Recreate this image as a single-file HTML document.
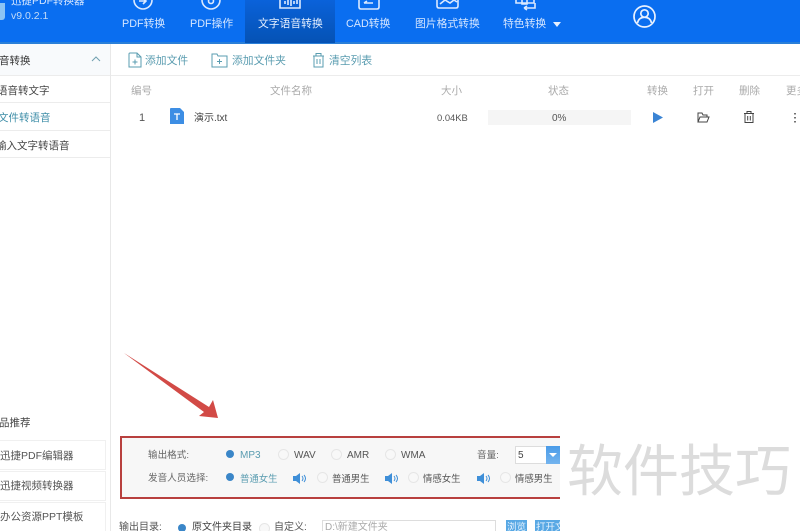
<!DOCTYPE html>
<html lang="zh"><head><meta charset="utf-8"><title>迅捷PDF转换器</title>
<style>
html,body{margin:0;padding:0;background:#fff}
#p{position:relative;width:800px;height:531px;overflow:hidden;background:#fff;font-family:"Liberation Sans","Noto Sans CJK SC",sans-serif;font-size:10.5px;color:#444}
#p div,#p span.t,#p svg{position:absolute}
.t{position:absolute;white-space:nowrap;line-height:14px}
.w{color:#d5e6ff;font-size:10.8px}
.h{color:#aaa;font-size:10.5px}
.r{width:9px;height:9px;border:1px solid #e6e6e6;border-radius:50%;background:#f8f8f8}
.d{width:8px;height:8px;border-radius:50%;background:#3a86c8}
.g{color:#666;font-size:9.6px}
.s{font-size:9.4px;color:#555}
</style></head><body><div id="p">
<div style="left:0;top:0;width:800px;height:42px;background:#0a6ef0"></div>
<div style="left:0;top:42px;width:800px;height:2px;background:#2a7fd8"></div>
<div style="left:245px;top:0;width:90px;height:43px;background:linear-gradient(#0a62da,#0552b4)"></div>
<div style="left:0;top:3px;width:5px;height:17px;background:#8cc4f4;border-radius:0 0 3px 0"></div>
<span class="t" style="left:11px;top:-6px;color:#d5e6ff;font-size:10.5px">迅捷PDF转换器</span>
<span class="t" style="left:11px;top:9px;color:#c5dcf8;font-size:10.5px">v9.0.2.1</span>

<span class="t w" style="left:122px;top:17px">PDF转换</span>
<span class="t w" style="left:190px;top:17px">PDF操作</span>
<span class="t w" style="left:258px;top:17px;color:#e6f0ff">文字语音转换</span>
<span class="t w" style="left:346px;top:17px">CAD转换</span>
<span class="t w" style="left:415px;top:17px">图片格式转换</span>
<span class="t w" style="left:503px;top:17px">特色转换</span>
<svg style="left:552px;top:22px" width="10" height="6"><path d="M1 0H9L5 5Z" fill="#e6f0ff"/></svg>

<svg style="left:120px;top:0" width="460" height="14" fill="none" stroke="#dbe9ff" stroke-width="1.6">
<path d="M14 0a9 9 0 0 0 18 0M19 1h7M23 -2l3 3-3 3"/>
<path d="M82 0a9 9 0 0 0 18 0"/><circle cx="91" cy="1" r="2.5"/>
<path d="M160 0v8h20V0M165 1v3M168 0v5M171 0v6M174 1v3M177 0v4"/>
<path d="M239 0v7q0 2 2 2h16q2 0 2-2V0M244 3h9M244 3l3-2"/>
<path d="M317 0v6q0 2 2 2h17q2 0 2-2V0M320 4l5-4 5 3 4-3 3 2"/>
<path d="M396 0v3h18V0M404 8h11V3M404 8l3-2M404 8l3 2M402 0v4h5V0"/>
</svg>
<svg style="left:632px;top:4px" width="25" height="25" fill="none" stroke="#e8f1ff" stroke-width="1.7">
<circle cx="12.5" cy="12.5" r="10.5"/><circle cx="12.5" cy="9.5" r="3.7"/><path d="M5.5 19c.8-4 3.5-5.7 7-5.7s6.200 1.700 7 5.700"/></svg>

<!-- sidebar -->
<div style="left:0;top:44px;width:110px;height:31px;background:#f8fafc"></div>
<div style="left:110px;top:44px;width:1px;height:487px;background:#e8e8e8"></div>
<div style="left:0;top:75px;width:110px;height:1px;background:#ececec"></div>
<div style="left:0;top:102px;width:110px;height:1px;background:#ececec"></div>
<div style="left:0;top:130px;width:110px;height:1px;background:#ececec"></div>
<div style="left:0;top:157px;width:110px;height:1px;background:#ececec"></div>
<span class="t" style="left:-1px;top:54px;color:#333;font-size:10.500px">音转换</span>
<svg style="left:91px;top:56px" width="10" height="6" fill="none" stroke="#72a0b0"><path d="M1 5l4-4 4 4"/></svg>
<span class="t" style="left:-3px;top:84px;color:#444">语音转文字</span>
<span class="t" style="left:-2px;top:111px;color:#3f8ea8">文件转语音</span>
<span class="t" style="left:-4px;top:139px;color:#444">输入文字转语音</span>
<span class="t" style="left:-1px;top:416px;color:#444">品推荐</span>
<div style="left:-2px;top:440px;width:106px;height:28px;border:1px solid #f0f0f0"></div>
<div style="left:-2px;top:471px;width:106px;height:28px;border:1px solid #f0f0f0"></div>
<div style="left:-2px;top:502px;width:106px;height:34px;border:1px solid #f0f0f0"></div>
<span class="t" style="left:0;top:449px;color:#555">迅捷PDF编辑器</span>
<span class="t" style="left:0;top:479px;color:#555">迅捷视频转换器</span>
<span class="t" style="left:0;top:510px;color:#555">办公资源PPT模板</span>

<!-- toolbar -->
<div style="left:111px;top:75px;width:689px;height:1px;background:#ececec"></div>
<svg style="left:128px;top:51px" width="250" height="18" fill="none" stroke="#5a9cb0" stroke-width="1">
<path d="M1 3q0-1 1-1h7l4 4v10H1zM9 2v4h4M4.500 11h5M7 8.500v5"/>
<path d="M84 3h5l1 2h9v11H84zM89 10.500h5M91.500 8v5"/>
<path d="M185 5h11M188 5V2.500h5V5M186 5v11h9V5M189 8v5M192 8v5"/></svg>
<span class="t" style="left:145px;top:54px;color:#5a9cb0;font-size:10.8px">添加文件</span>
<span class="t" style="left:232px;top:54px;color:#5a9cb0;font-size:10.8px">添加文件夹</span>
<span class="t" style="left:329px;top:54px;color:#5a9cb0;font-size:10.8px">清空列表</span>

<!-- table -->
<span class="t h" style="left:131px;top:84px">编号</span>
<span class="t h" style="left:270px;top:84px">文件名称</span>
<span class="t h" style="left:441px;top:84px">大小</span>
<span class="t h" style="left:548px;top:84px">状态</span>
<span class="t h" style="left:647px;top:84px">转换</span>
<span class="t h" style="left:693px;top:84px">打开</span>
<span class="t h" style="left:739px;top:84px">删除</span>
<span class="t h" style="left:786px;top:84px">更多</span>
<span class="t" style="left:139px;top:111px;font-size:11px;color:#555">1</span>
<svg style="left:170px;top:108px" width="14" height="16"><path d="M0 1q0-1 1-1h9l4 4v12H0z" fill="#3d8ee4"/><path d="M4 6h6M7 6v6" stroke="#fff" stroke-width="1.300"/></svg>
<span class="t" style="left:194px;top:112px;font-size:10px;color:#444">演示.txt</span>
<span class="t" style="left:437px;top:111px;font-size:9.400px;color:#555">0.04KB</span>
<div style="left:488px;top:110px;width:143px;height:15px;background:#f5f5f5"></div>
<span class="t" style="left:552px;top:112px;font-size:10px;color:#555">0%</span>
<svg style="left:652px;top:111px" width="12" height="13"><path d="M1 1L11 6.500 1 12Z" fill="#3a84d4"/></svg>
<svg style="left:696px;top:111px" width="14" height="13" fill="none" stroke="#444"><path d="M2 11V2h4l1 2h4v2M2 11l2-5h9l-2 5z"/></svg>
<svg style="left:742px;top:110px" width="14" height="14" fill="none" stroke="#444"><path d="M2 3.500h10M5 3.500V1.500h4v2M3 3.500v9h8v-9M5.700 6v4.500M8.300 6v4.500"/></svg>
<svg style="left:794px;top:112px" width="4" height="11"><path d="M1 1v1.500M1 5v1.500M1 9v1.500" stroke="#444" stroke-width="1.500"/></svg>

<!-- arrow -->
<svg style="left:120px;top:350px" width="105" height="72"><path d="M4 3L89 57 93 50 98 68 79 66 84 62Z" fill="#d24a46"/></svg>

<!-- red box -->
<div style="left:120px;top:436px;width:438px;height:59px;background:#f7f7f7;border:2px solid #b8403e;border-right:0;border-left:2px solid #b8403e"></div>
<span class="t g" style="left:148px;top:449px">输出格式:</span>
<div class="d" style="left:226px;top:450px"></div>
<span class="t" style="left:240px;top:449px;color:#5a9cb0;font-size:10px">MP3</span>
<div class="r" style="left:278px;top:449px"></div>
<span class="t" style="left:294px;top:449px;font-size:10px;color:#555">WAV</span>
<div class="r" style="left:331px;top:449px"></div>
<span class="t" style="left:347px;top:449px;font-size:10px;color:#555">AMR</span>
<div class="r" style="left:385px;top:449px"></div>
<span class="t" style="left:401px;top:449px;font-size:10px;color:#555">WMA</span>
<span class="t g" style="left:477px;top:449px">音量:</span>
<div style="left:515px;top:446px;width:31px;height:16px;background:#fff;border:1px solid #ddd"></div>
<span class="t" style="left:518px;top:449px;font-size:10px;color:#444">5</span>
<div style="left:546px;top:446px;width:14px;height:18px;background:linear-gradient(#4a9be8,#74b4ee)"></div>
<svg style="left:549px;top:453px" width="9" height="5"><path d="M0 0H8L4 4Z" fill="#fff"/></svg>
<span class="t g" style="left:148px;top:472px">发音人员选择:</span>
<div class="d" style="left:226px;top:473px"></div>
<span class="t s" style="left:240px;top:472px;color:#5a9cb0">普通女生</span>
<svg style="left:293px;top:472px" width="14" height="13" fill="#3f8fd8"><path d="M0 4h3l4-3v11L3 9H0z"/><path d="M9 4q2 2.500 0 5M11 3q3 3.500 0 7" fill="none" stroke="#3f8fd8"/></svg>
<div class="r" style="left:317px;top:472px"></div>
<span class="t s" style="left:332px;top:472px">普通男生</span>
<svg style="left:385px;top:472px" width="14" height="13" fill="#3f8fd8"><path d="M0 4h3l4-3v11L3 9H0z"/><path d="M9 4q2 2.500 0 5M11 3q3 3.500 0 7" fill="none" stroke="#3f8fd8"/></svg>
<div class="r" style="left:408px;top:472px"></div>
<span class="t s" style="left:423px;top:472px">情感女生</span>
<svg style="left:477px;top:472px" width="14" height="13" fill="#3f8fd8"><path d="M0 4h3l4-3v11L3 9H0z"/><path d="M9 4q2 2.500 0 5M11 3q3 3.500 0 7" fill="none" stroke="#3f8fd8"/></svg>
<div class="r" style="left:500px;top:472px"></div>
<span class="t s" style="left:515px;top:472px">情感男生</span>

<!-- bottom row -->
<span class="t" style="left:119px;top:521px;font-size:10px;color:#555">输出目录:</span>
<div class="d" style="left:178px;top:524px"></div>
<span class="t" style="left:192px;top:521px;font-size:10px;color:#444">原文件夹目录</span>
<div class="r" style="left:259px;top:523px"></div>
<span class="t" style="left:274px;top:521px;font-size:10px;color:#555">自定义:</span>
<div style="left:322px;top:520px;width:172px;height:14px;border:1px solid #ddd;background:#fff"></div>
<span class="t" style="left:325px;top:521px;font-size:10px;color:#aaa">D:\新建文件夹</span>
<div style="left:506px;top:520px;width:21px;height:14px;background:#58a8e4"></div>
<span class="t" style="left:507px;top:521px;font-size:9.500px;color:#e8f4ff">浏览</span>
<div style="left:535px;top:520px;width:25px;height:14px;background:#58a8e4;overflow:hidden"></div>
<span class="t" style="left:536px;top:521px;font-size:9.500px;color:#e8f4ff;width:24px;overflow:hidden">打开文</span>

<!-- watermark -->
<span class="t" style="left:567px;top:440px;font-size:56px;line-height:64px;letter-spacing:0;color:#dcdcdc">软件技巧</span>
</div></body></html>
